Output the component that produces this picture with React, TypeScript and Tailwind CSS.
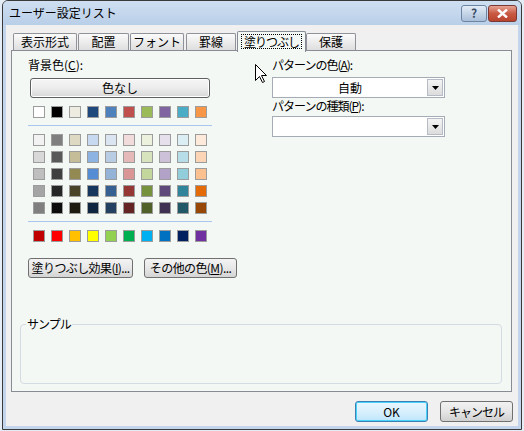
import React from 'react'

// テーマの色（上段）と濃淡、標準の色
const themeTop = ['#ffffff', '#000000', '#eeece1', '#1f497d', '#4f81bd', '#c0504d', '#9bbb59', '#8064a2', '#4bacc6', '#f79646']
const shades = [
  ['#f2f2f2', '#7f7f7f', '#ddd9c3', '#c6d9f0', '#dbe5f1', '#f2dcdb', '#ebf1dd', '#e5e0ec', '#dbeef3', '#fdeada'],
  ['#d8d8d8', '#595959', '#c4bd97', '#8db3e2', '#b8cce4', '#e5b9b7', '#d7e3bc', '#ccc1d9', '#b7dde8', '#fbd5b5'],
  ['#bfbfbf', '#3f3f3f', '#938953', '#548dd4', '#95b3d7', '#d99694', '#c3d69b', '#b2a2c7', '#92cddc', '#fac08f'],
  ['#a5a5a5', '#262626', '#494429', '#17365d', '#366092', '#953734', '#76923c', '#5f497a', '#31859b', '#e36c09'],
  ['#7f7f7f', '#0c0c0c', '#1d1b10', '#0f243e', '#244061', '#632423', '#4f6128', '#3f3151', '#205867', '#974806'],
]
const standard = ['#c00000', '#ff0000', '#ffc000', '#ffff00', '#92d050', '#00b050', '#00b0f0', '#0070c0', '#002060', '#7030a0']

const tabs = [
  { label: '表示形式', cls: 'w-[64px]' },
  { label: '配置', cls: 'w-[51px] ml-[1px]' },
  { label: 'フォント', cls: 'w-[54px] ml-[1px]' },
  { label: '罫線', cls: 'w-[50px] ml-[2px]' },
  { label: '塗りつぶし', cls: 'w-[69px] ml-[1px]', active: true },
  { label: '保護', cls: 'w-[50px]' },
]

function SwatchRow({ colors }: { colors: string[] }) {
  return (
    <div className="flex gap-[6px] ml-[5px]">
      {colors.map((c, i) => (
        <div key={i} className="w-[12px] h-[12px] border border-[#9c9c9c]" style={{ backgroundColor: c }} />
      ))}
    </div>
  )
}

function Combo({ value }: { value?: string }) {
  return (
    <div className="h-[21px] w-[173px] border border-[#a5acb5] bg-white flex items-center">
      <div className="flex-1 text-center leading-[14px]">{value}</div>
      <div className="w-[16px] h-[17px] mr-[1px] border border-[#b5bcc6] bg-gradient-to-b from-[#f4f4f4] to-[#dcdcdc] flex items-center justify-center">
        <svg width="7" height="4" viewBox="0 0 7 4"><path d="M0 0h7L3.5 4z" fill="#000" /></svg>
      </div>
    </div>
  )
}

function Btn({ children, className }: { children: React.ReactNode; className: string }) {
  return (
    <div className={`shrink-0 h-[20px] border border-[#707070] rounded-[3px] bg-gradient-to-b from-[#f3f3f3] via-[#e8e8e8] to-[#d4d4d4] flex items-center justify-center leading-[14px] whitespace-nowrap tracking-[-0.6px] ${className}`}>
      {children}
    </div>
  )
}

export default function App() {
  return (
    <div className="relative w-[524px] h-[431px] bg-[#e4ecf6] overflow-hidden text-[12px] text-black font-['Noto_Sans_CJK_JP','Noto_Sans',sans-serif]">
      {/* ウィンドウ */}
      <div className="ml-[2px] w-[520px] h-[430px] border border-[#3a3a3a] rounded-t-[6px] bg-[#c2d5ec] flex flex-col">
        {/* タイトルバー */}
        <div className="h-[24px] flex items-center pl-[6px] pr-[4px] rounded-t-[5px] bg-gradient-to-b from-[#cfdff1] to-[#b9cfe8]">
          <span className="flex-1 leading-[14px] text-[12px]">ユーザー設定リスト</span>
          <div className="w-[26px] h-[17px] mr-[1px] rounded-[3px] border border-[#6d84a3] bg-gradient-to-b from-[#e3ecf6] to-[#a9bfd9] flex items-center justify-center text-[12px] font-bold text-[#3b4d66] leading-none">?</div>
          <div className="w-[29px] h-[17px] rounded-[3px] border border-[#7a3a33] bg-gradient-to-b from-[#e5a394] via-[#c95a43] to-[#b9442e] flex items-center justify-center">
            <svg width="11" height="9" viewBox="0 0 11 9">
              <path d="M1 0.5L10 8.5M10 0.5L1 8.5" stroke="#fff" strokeWidth="2.4" />
            </svg>
          </div>
        </div>

        {/* 本体 */}
        <div className="mx-[3px] mb-[3px] flex-1 bg-[#f0f0f0] flex flex-col">
          {/* タブ */}
          <div className="pt-[6px] pl-[7px]">
            <div className="h-[19px] flex items-end">
              {tabs.map(t =>
                t.active ? (
                  <div key={t.label} className={`relative z-10 -mb-[2px] h-[21px] border border-b-0 border-[#898c95] rounded-t-[2px] bg-[#f4f8f4] flex items-start justify-center pt-[2px] ${t.cls}`}>
                    <span className="border border-dotted border-black px-[2px] leading-[13px] tracking-[-1px] whitespace-nowrap">{t.label}</span>
                  </div>
                ) : (
                  <div key={t.label} className={`h-[17px] border border-b-0 border-[#8f9298] rounded-t-[2px] bg-gradient-to-b from-[#fbfbfb] to-[#dedede] flex items-center justify-center leading-[14px] whitespace-nowrap ${t.cls}`}>
                    {t.label}
                  </div>
                )
              )}
            </div>
          </div>

          {/* パネル */}
          <div className="ml-[5px] w-[501px] h-[342px] border border-[#898c95] bg-[#f4f8f4] flex flex-col">
            <div className="flex pt-[7px] pl-[16px]">
              {/* 背景色 */}
              <div className="w-[184px] shrink-0 flex flex-col">
                <div className="leading-[14px]">背景色(<u>C</u>):</div>
                <div className="mt-[6px] ml-[2px] w-[180px] h-[20px] border border-[#5f5f5f] rounded-[3px] bg-gradient-to-b from-[#f6f6f6] via-[#ececec] to-[#d8d8d8] flex items-center justify-center leading-[14px] shadow-[inset_0_0_0_1px_#ffffff]">
                  色なし
                </div>
                <div className="mt-[8px]">
                  <SwatchRow colors={themeTop} />
                </div>
                <div className="mt-[7px] h-[1px] bg-[#a9c6ee]" />
                <div className="mt-[8px] flex flex-col gap-[5px]">
                  {shades.map((row, i) => (
                    <SwatchRow key={i} colors={row} />
                  ))}
                </div>
                <div className="mt-[7px] h-[1px] bg-[#a9c6ee]" />
                <div className="mt-[8px]">
                  <SwatchRow colors={standard} />
                </div>
                <div className="mt-[16px] flex gap-[11px]">
                  <Btn className="w-[105px]">塗りつぶし効果(<u>I</u>)...</Btn>
                  <Btn className="w-[93px]">その他の色(<u>M</u>)...</Btn>
                </div>
              </div>

              {/* パターン */}
              <div className="ml-[60px] w-[173px] flex flex-col">
                <div className="leading-[14px] tracking-[-1px]">パターンの色(<u>A</u>):</div>
                <div className="mt-[5px]">
                  <Combo value="自動" />
                </div>
                <div className="leading-[14px] mt-[1px] tracking-[-1px]">パターンの種類(<u>P</u>):</div>
                <div className="mt-[3px]">
                  <Combo />
                </div>
              </div>
            </div>

            {/* サンプル */}
            <div className="relative mt-[46px] ml-[8px] w-[482px] h-[60px] border border-[#d3dce3] rounded-[4px]">
              <span className="absolute -top-[8px] left-[5px] bg-[#f4f8f4] px-[1px] leading-[14px] tracking-[-1px]">サンプル</span>
            </div>
          </div>

          {/* OK / キャンセル */}
          <div className="mt-[9px] pr-[5px] flex justify-end gap-[12px]">
            <div className="w-[73px] h-[21px] rounded-[3px] border border-[#3c7fb1] bg-gradient-to-b from-[#eaf6fd] via-[#d9f0fc] to-[#bee6fd] shadow-[inset_0_0_0_1px_#48d2fc] flex items-center justify-center leading-[14px]">
              OK
            </div>
            <div className="w-[73px] h-[21px] rounded-[3px] border border-[#707070] bg-gradient-to-b from-[#f2f2f2] via-[#e6e6e6] to-[#d0d0d0] flex items-center justify-center leading-[14px] tracking-[-1px]">
              キャンセル
            </div>
          </div>
        </div>
      </div>

      {/* マウスカーソル */}
      <svg className="absolute left-[255px] top-[64px]" width="12" height="19" viewBox="0 0 12 19">
        <path d="M0.5 0.5V16.5L4.5 12.5L7.5 18.5L9.5 17.5L6.5 11.5H11.5Z" fill="#fff" stroke="#000" strokeWidth="1" strokeLinejoin="miter" />
      </svg>
    </div>
  )
}
